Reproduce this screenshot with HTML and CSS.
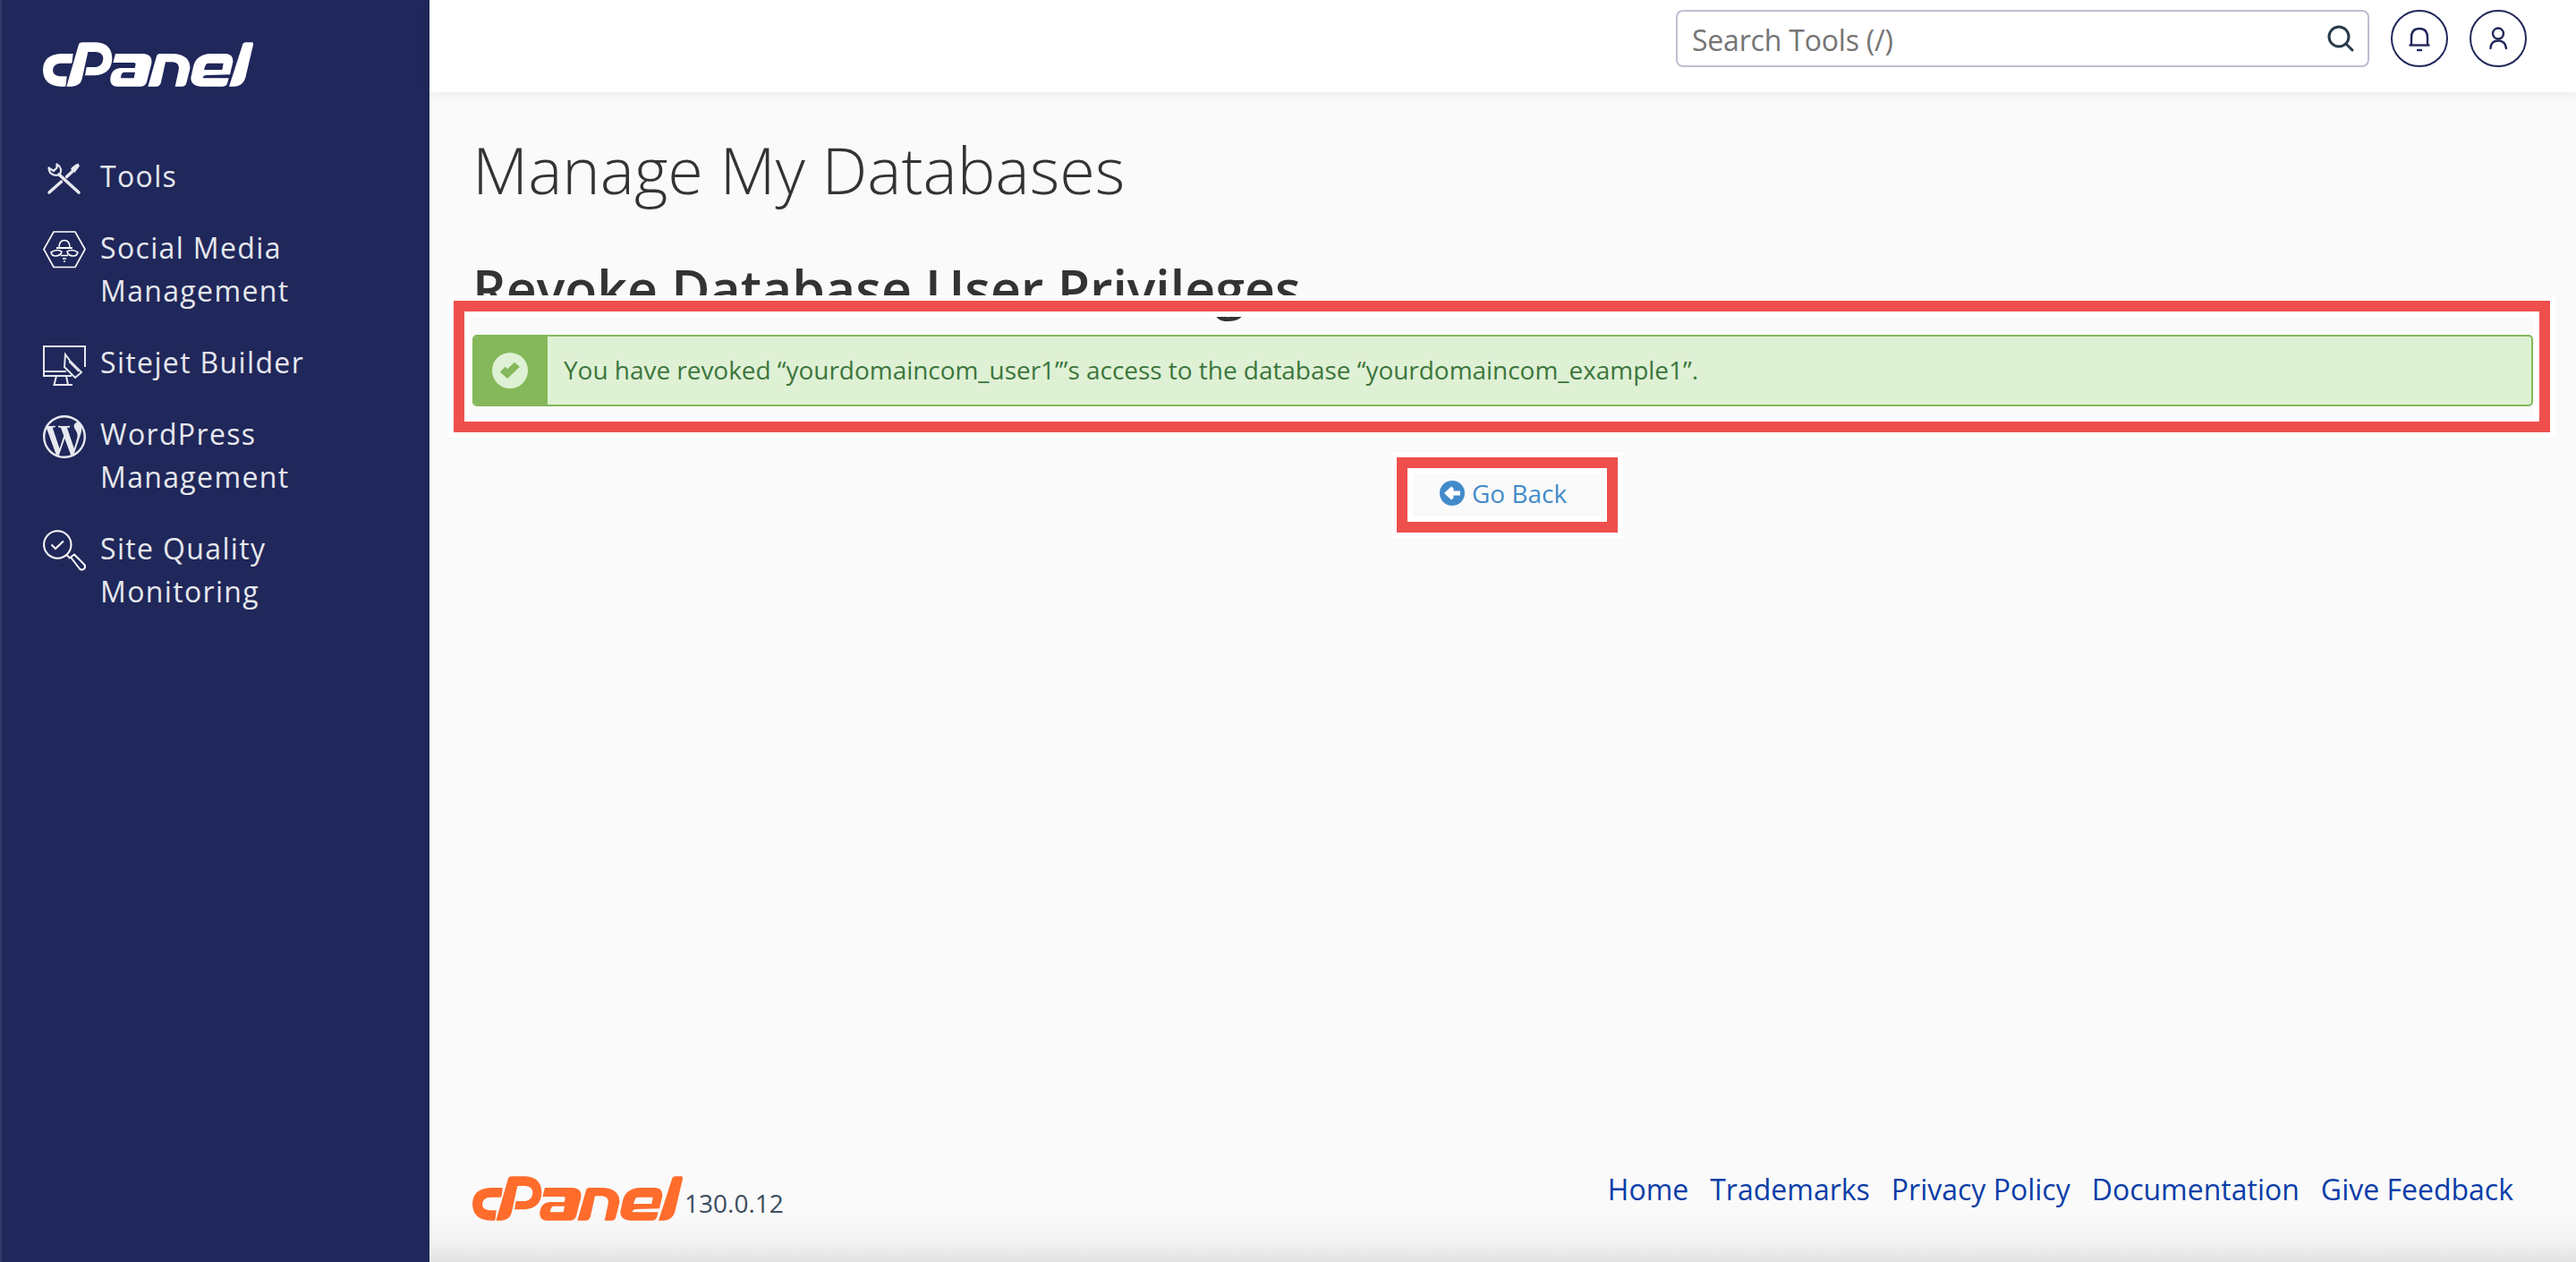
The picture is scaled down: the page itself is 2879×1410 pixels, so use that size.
FILE: index.html
```html
<!DOCTYPE html>
<html lang="en">
<head>
<meta charset="utf-8">
<title>Manage My Databases</title>
<link rel="stylesheet" href="styles.css">
</head>
<body>
<svg class="defs" width="0" height="0" aria-hidden="true">
  <symbol id="cpanel-logo" viewBox="27 42 705 148">
    <path d="M128 80L88 80Q28 82 27 135Q28 188 88 190L100 190Q103 190 104 184L107 156L84 156Q60 154 60 135Q62 112 88 112L122 112Q124 112 125 106Z"/>
    <path d="M146 52Q148 42 160 42L205 42Q259 45 259 98Q256 150 200 153L168 153L173 125L205 125Q226 122 229 98Q229 76 205 74L178 74L158 165Q152 188 125 190L106 190Z"/>
    <path fill-rule="evenodd" d="M270 80L362 80Q395 82 391 112L375 175Q370 190 352 190L275 190Q250 188 253 160Q258 130 285 128L335 128L338 115Q338 110 332 110L262 110ZM298 142Q288 145 288 162L332 162L336 142Z"/>
    <path d="M408 88Q410 80 420 80L465 80Q522 84 520 130L508 178Q505 190 492 190L470 190L482 135Q486 110 462 108L438 108L423 175Q420 190 405 190L379 190Z"/>
    <path fill-rule="evenodd" d="M590 80L640 80Q666 82 664 108L654 150L575 152Q565 152 563 162L650 162L645 180Q642 190 630 190L560 190Q522 188 523 160L532 120Q542 82 590 80ZM580 112Q572 114 570 125L567 134L628 134L632 112Z"/>
    <path d="M697 48Q699 42 708 42L728 42Q733 42 732 50L706 160Q698 188 668 190L651 190Z"/>
  </symbol>
</svg>
<div class="page">
  <aside class="sidebar">
    <svg class="logo logo-white"><use href="#cpanel-logo"/></svg>
    <nav class="nav">
      <a class="nav-item">
        <svg class="nav-icon" viewBox="0 0 48 48"><g fill="none" stroke="currentColor" stroke-linecap="round"><path d="M40 42L18 22" stroke-width="3.6"/><path d="M6.500 14.500Q6.500 22 14.500 23Q21 22.500 20 16Q19 12.500 15.500 10.500L15.500 14.500L12 18L6.500 14.500Z" stroke-width="2.200" stroke-linejoin="round"/><path d="M7 42L20.500 30" stroke-width="3.4"/><path d="M26.500 24.500L33 18.500" stroke-width="3.400"/></g><path d="M39.500 9.500L41 12.500L35.500 20L31 16Q33 12 39.500 9.500Z" fill="currentColor"/></svg>
        <span>Tools</span>
      </a>
      <a class="nav-item">
        <svg class="nav-icon" viewBox="0 0 48 48"><g fill="none" stroke="#fff" stroke-width="1.6" stroke-linejoin="round"><path d="M1 25.500L12 6H36L47 25.500L36 45.500H12Z"/><path d="M18 24Q18 15.500 24 15.500Q30 15.500 30 24" /><path d="M15 24H33" stroke-width="2"/><path d="M9 29Q15 24.500 21 28Q20 33 14 33Q10 33 9 29Z"/><path d="M39 29Q33 24.500 27 28Q28 33 34 33Q38 33 39 29Z"/><path d="M20 32.500H28M22 36H26" stroke-width="1.500"/><path d="M23 39H25" stroke-width="1.400"/></g></svg>
        <span>Social Media<br>Management</span>
      </a>
      <a class="nav-item">
        <svg class="nav-icon" viewBox="0 0 48 48"><g fill="none" stroke="#e6e8ee" stroke-width="2"><path d="M47 29V6H1V39H32"/><path d="M1 34H26"/><path d="M15 39L12.500 49H33M26 39L28 49" /><path d="M26 21L25 35L37 47L44 41L32 29Z" transform="translate(-1 -6)" fill="#20275a"/><path d="M30 29L41 40" transform="translate(-1 -6)" stroke-width="1.400"/></g></svg>
        <span>Sitejet Builder</span>
      </a>
      <a class="nav-item">
        <svg class="nav-icon wp" viewBox="0 0 24 24"><path fill="#e6e8ee" d="M21.469 6.825c.84 1.537 1.318 3.3 1.318 5.175 0 3.979-2.156 7.456-5.363 9.325l3.295-9.527c.615-1.54.82-2.771.82-3.864 0-.405-.026-.78-.07-1.11m-7.981.105c.647-.03 1.232-.105 1.232-.105.582-.075.514-.93-.067-.899 0 0-1.755.135-2.88.135-1.064 0-2.85-.15-2.85-.15-.585-.03-.661.855-.075.885 0 0 .54.061 1.125.09l1.68 4.605-2.37 7.08L5.354 6.9c.649-.03 1.234-.1 1.234-.1.585-.075.516-.93-.065-.896 0 0-1.746.138-2.874.138-.2 0-.438-.008-.69-.015C4.911 3.15 8.235 1.215 12 1.215c2.809 0 5.365 1.072 7.286 2.833-.046-.003-.091-.009-.141-.009-1.06 0-1.812.923-1.812 1.914 0 .89.513 1.643 1.06 2.531.411.72.89 1.643.89 2.977 0 .915-.354 1.994-.821 3.479l-1.075 3.585-3.9-11.61.001.014zM12 22.784c-1.059 0-2.081-.153-3.048-.437l3.237-9.406 3.315 9.087c.024.053.05.101.078.149-1.12.393-2.325.609-3.582.609M1.211 12c0-1.564.336-3.05.935-4.39L7.29 21.709C3.694 19.96 1.212 16.271 1.211 12M12 0C5.385 0 0 5.385 0 12s5.385 12 12 12 12-5.385 12-12S18.615 0 12 0"/></svg>
        <span>WordPress<br>Management</span>
      </a>
      <a class="nav-item">
        <svg class="nav-icon" viewBox="0 0 48 48"><g fill="none" stroke="#fff" stroke-width="2"><circle cx="16.300" cy="19.500" r="15.200"/><path d="M9.500 19.500L14 24L23 15.500"/><path d="M27 31.500L30.500 35"/><path d="M31 33.500L35 30.500L46.500 42Q48 45 45.500 47Q43 48.500 41 46.500Z" stroke-linejoin="round"/></g></svg>
        <span>Site Quality<br>Monitoring</span>
      </a>
    </nav>
  </aside>
  <div class="main">
    <header class="topbar">
      <label class="search">
        <input class="search-input" type="text" placeholder="Search Tools (/)">
        <svg class="search-icon" viewBox="0 0 32 32"><circle cx="14" cy="14" r="11" fill="none" stroke="#293a4a" stroke-width="3"/><path d="M22 22L29 29" stroke="#293a4a" stroke-width="3" stroke-linecap="round"/></svg>
      </label>
      <button class="round-btn" type="button"><svg viewBox="0 0 60 60" width="60" height="60"><g fill="none" stroke="#20275a" stroke-width="2.400"><path d="M21 37V29Q21 19 30 19Q39 19 39 29V37"/><path d="M18.500 37.500H41.500"/><path d="M27 43H33"/></g></svg></button>
      <button class="round-btn" type="button"><svg viewBox="0 0 60 60" width="60" height="60"><g fill="none" stroke="#20275a" stroke-width="2.400"><circle cx="30" cy="24.500" r="6"/><path d="M21.500 41Q22 32.500 30 32.500Q38 32.500 39 41" stroke-linecap="round"/></g></svg></button>
    </header>
    <main class="content">
      <h1 class="title">Manage My Databases</h1>
      <h2 class="subtitle">Revoke Database User Privileges</h2>
      <div class="mark mark-alert">
        <div class="alert">
          <div class="alert-icon">
            <svg viewBox="0 0 40 40" width="40" height="40"><circle cx="20" cy="20" r="20" fill="#dff1d5"/><path d="M9.500 21.500L15.500 15.500L18 18L26 10.500L32 15.500L18 29Z" fill="#84b85a" transform="translate(-.5 .5) scale(.98)"/></svg>
          </div>
          <p class="alert-text">You have revoked “yourdomaincom_user1’”s access to the database “yourdomaincom_example1”.</p>
        </div>
      </div>
      <div class="back-row">
        <a class="mark back-link">
          <svg viewBox="0 0 28 28" width="28" height="28"><circle cx="14" cy="14" r="14" fill="#428bca"/><path d="M5 14L13 6.500L15.500 8.500V11.500H23V16.500H15.500V19.500L13 21.500Z" fill="#fff"/></svg>
          <span>Go Back</span>
        </a>
      </div>
    </main>
    <footer class="footer">
      <div class="brand">
        <svg class="logo logo-orange"><use href="#cpanel-logo"/></svg>
        <span class="version">130.0.12</span>
      </div>
      <div class="links">
        <a>Home</a>
        <a>Trademarks</a>
        <a>Privacy Policy</a>
        <a>Documentation</a>
        <a>Give Feedback</a>
      </div>
    </footer>
  </div>
</div>
</body>
</html>
```

FILE: styles.css
```css
* { box-sizing: border-box; }
html, body { margin: 0; height: 100%; }
body {
  font-family: "Open Sans", "Noto Sans", sans-serif;
  background: #fafafa;
  color: #333;
  overflow: hidden;
}
.defs { position: absolute; }
.page { display: flex; height: 1410px; }

.sidebar {
  width: 480px;
  flex: none;
  background: #20275a;
  border-left: 2px solid #33396a;
  padding: 47px 0 0 46px;
  color: #e6e8ee;
}
.logo { display: block; width: 235px; height: 50px; fill: currentColor; }
.logo-white { color: #fff; }
.logo-orange { color: #ff6c2c; }
.nav { display: flex; flex-direction: column; gap: 32px; margin-top: 76px; }
.nav-item {
  display: flex;
  gap: 16px;
  font-size: 32px;
  line-height: 48px;
  letter-spacing: 1.35px;
}
.nav-icon { width: 48px; height: 48px; flex: none; color: #e6e8ee; overflow: visible; }
.nav-icon.wp { margin-top: 3px; }

.main { flex: 1; display: flex; flex-direction: column; min-width: 0; }
.topbar {
  height: 103px;
  flex: none;
  background: #fff;
  display: flex;
  justify-content: flex-end;
  align-items: flex-start;
  gap: 24px;
  padding: 11px 55px 0 0;
  box-shadow: 0 2px 12px rgba(0, 0, 0, .07);
  position: relative;
}
.search {
  width: 775px;
  height: 64px;
  border: 2px solid #bcbfd2;
  border-radius: 8px;
  display: flex;
  align-items: center;
  padding: 0 14px 0 16px;
}
.search-input {
  flex: 1;
  border: 0;
  outline: 0;
  padding: 3px 0 0;
  background: none;
  font: 32px/44px "Open Sans", sans-serif;
  letter-spacing: -.2px;
  color: #333;
}
.search-input::placeholder { color: #757575; opacity: 1; }
.search-icon { width: 32px; height: 32px; flex: none; }
.round-btn {
  width: 64px;
  height: 64px;
  padding: 0;
  border: 2px solid #20275a;
  border-radius: 50%;
  background: #fff;
  display: flex;
  align-items: center;
  justify-content: center;
}

.content { flex: 1; padding: 46px 29px 0 48px; }
.title {
  margin: 0;
  font-size: 72px;
  line-height: 80px;
  font-weight: 300;
  color: #333;
}
.subtitle {
  margin: 60px 0 0;
  font-size: 59px;
  line-height: 66px;
  font-weight: 600;
  color: #333;
}
.mark {
  border: 12px solid #ee4f4d;
  box-shadow: 0 0 0 6px #fff, inset 0 0 0 6px #fff;
  position: relative;
}
.mark-alert {
  margin: -19px 0 0 -21px;
  height: 147px;
  padding: 26px 7px 0 9px;
}
.alert {
  height: 80px;
  display: flex;
  border: 2px solid #84b85a;
  border-radius: 5px;
  background: #dff1d5;
  overflow: hidden;
}
.alert-icon {
  width: 82px;
  flex: none;
  background: #84b85a;
  display: flex;
  align-items: center;
  justify-content: center;
  padding-right: 2px;
}
.alert-text {
  margin: 0;
  padding-left: 18px;
  font-size: 28px;
  line-height: 74px;
  letter-spacing: -.04px;
  color: #3c763d;
}
.back-row { display: flex; justify-content: center; padding: 28px 9px 0 0; }
.back-link {
  width: 247px;
  height: 84px;
  display: flex;
  align-items: center;
  gap: 8px;
  padding: 0 0 4px 36px;
  font-size: 28px;
  line-height: 40px;
  color: #428bca;
}

.footer {
  height: 110px;
  flex: none;
  display: flex;
  justify-content: space-between;
  align-items: flex-start;
  padding: 7px 70px 0 48px;
  background: linear-gradient(to bottom, #fafafa 0, #fafafa 50px, #f4f4f4 85px, #e2e2e2 110px);
}
.brand { display: flex; align-items: flex-end; gap: 2px; padding-top: 7px; }
.version { font-size: 28px; line-height: 40px; color: #3d4d5e; }
.links { display: flex; gap: 24px; font-size: 32px; line-height: 44px; color: #0a3ea8; }
```
